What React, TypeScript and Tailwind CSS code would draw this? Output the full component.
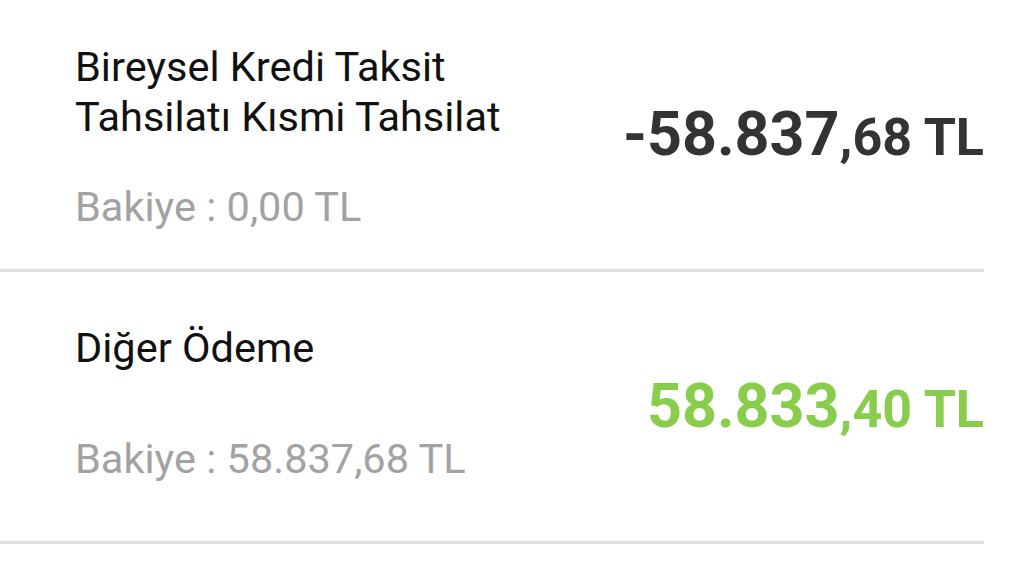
const rows = [
  {
    title: ["Bireysel Kredi Taksit", "Tahsilatı Kısmi Tahsilat"],
    balance: "0,00 TL",
    whole: "-58.837",
    cents: ",68 TL",
    positive: false,
  },
  {
    title: ["Diğer Ödeme"],
    balance: "58.837,68 TL",
    whole: "58.833",
    cents: ",40 TL",
    positive: true,
  },
];

export default function App() {
  return (
    <div
      className="w-[1032px] h-[563px] overflow-hidden bg-white"
      style={{ fontFamily: "Roboto, 'Noto Sans', sans-serif" }}
    >
      <div className="w-[984px]">
        {rows.map((row, i) => (
          <div
            key={i}
            className="flex items-center justify-between h-[272px] pl-[75px] border-b-[3px] border-[#dedede]"
          >
            {/* Description and remaining balance */}
            <div
              className={
                i === 0
                  ? "self-start flex flex-col pt-[42px]"
                  : "self-start flex flex-col pt-[51px]"
              }
            >
              <div className="text-[41.5px] leading-[50px] text-[#111111]">
                {row.title.map((line) => (
                  <div key={line}>{line}</div>
                ))}
              </div>
              <div
                className={
                  i === 0
                    ? "mt-[40px] text-[41.5px] leading-[50px] text-[#a2a2a2]"
                    : "mt-[61px] text-[41.5px] leading-[50px] text-[#a2a2a2]"
                }
              >
                Bakiye : {row.balance}
              </div>
            </div>

            {/* Transaction amount */}
            <div
              className={
                row.positive
                  ? "font-bold whitespace-nowrap text-[#88cd4b]"
                  : "font-bold whitespace-nowrap text-[#333333]"
              }
            >
              <span className="text-[61px] leading-none">{row.whole}</span>
              <span className="text-[52px] leading-none">{row.cents}</span>
            </div>
          </div>
        ))}
      </div>
    </div>
  );
}
